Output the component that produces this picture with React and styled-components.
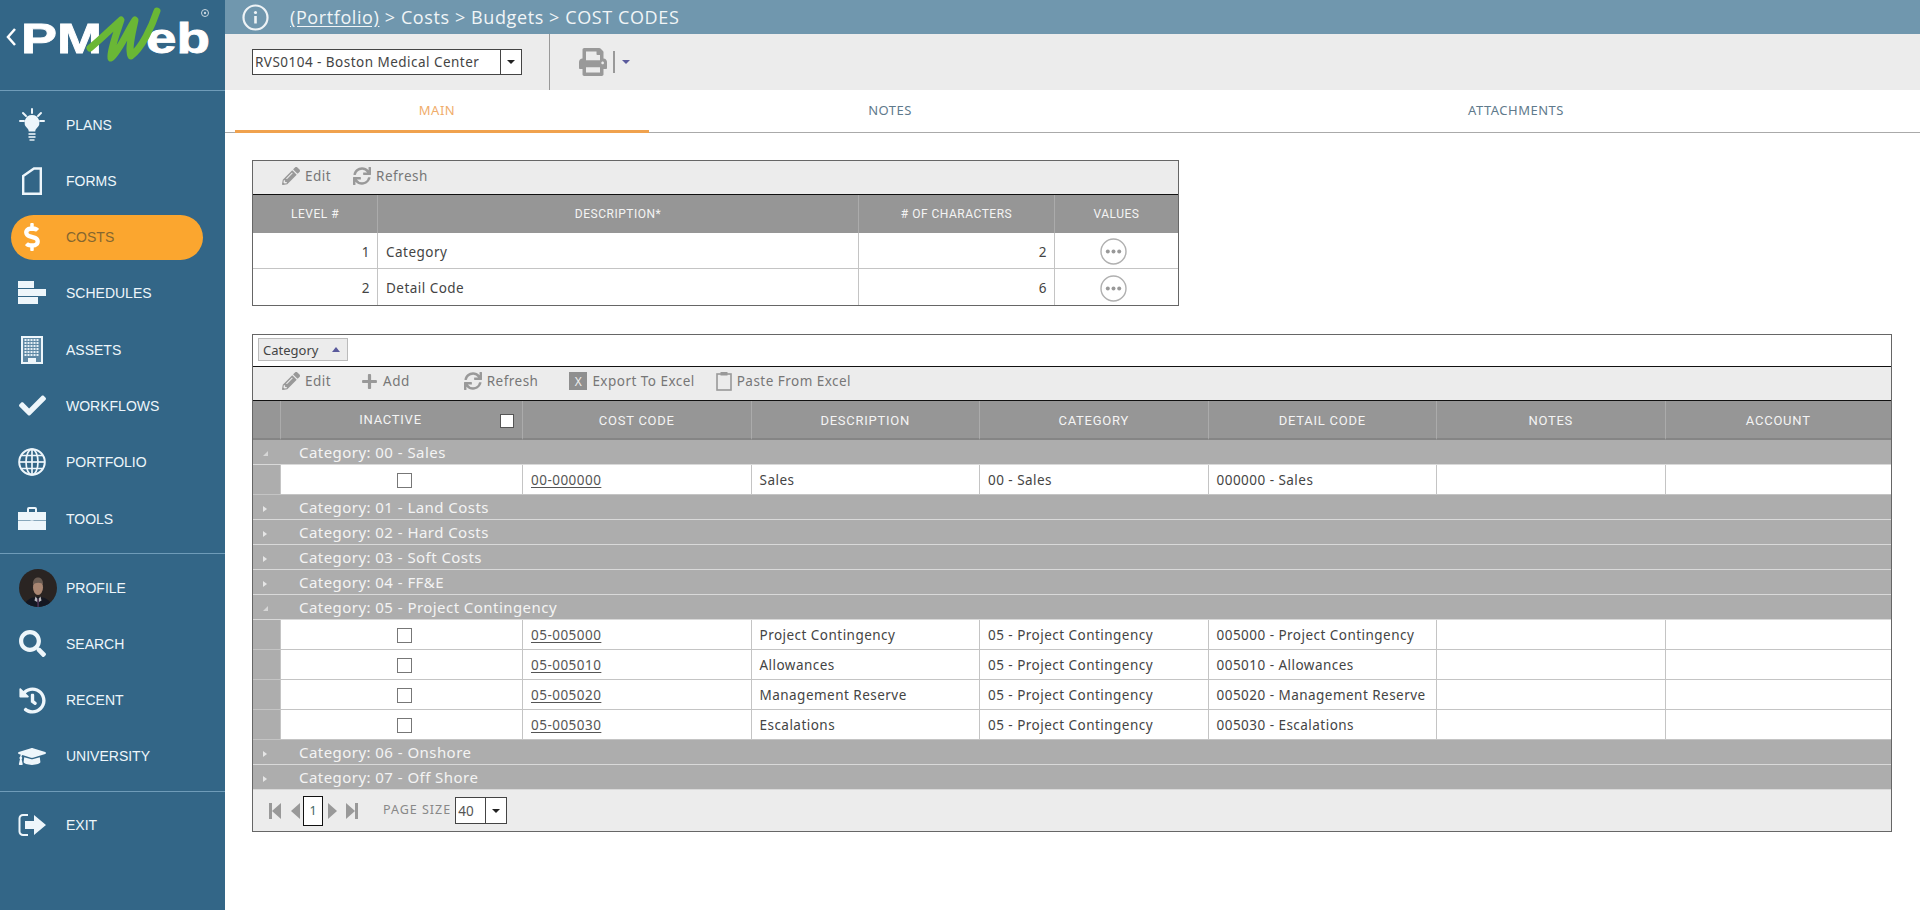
import React from 'react';
import styled, { createGlobalStyle } from 'styled-components';
import { FaDollarSign, FaCheck, FaSearch, FaHistory, FaGraduationCap, FaPencilAlt, FaSync, FaPrint, FaPlus } from 'react-icons/fa';

const UI_FONT = '"Noto Sans", Roboto, sans-serif';

const GlobalStyle = createGlobalStyle`
  * { box-sizing: border-box; }
  html, body { margin: 0; padding: 0; background: #fff; }
  body { font-family: ${UI_FONT}; color: #444; }
`;

const Shell = styled.div`
  display: flex;
  width: 1920px;
  height: 910px;
  overflow: hidden;
`;

const Sidebar = styled.nav`
  width: 225px;
  flex-shrink: 0;
  background: #336687;
  display: flex;
  flex-direction: column;
`;

const LogoBox = styled.div`
  height: 91px;
  border-bottom: 1px solid #6f9cb9;
`;

const NavGroup = styled.div`
  display: flex;
  flex-direction: column;
  gap: 11.3px;
  padding: 11px 0 12px;
  border-bottom: ${props => (props.$last ? 'none' : '1px solid #6f9cb9')};
`;

const NavItem = styled.a`
  display: flex;
  align-items: center;
  gap: 20px;
  height: 45px;
  margin: 0 22px 0 11px;
  padding-left: 7px;
  border-radius: 23px;
  background: ${props => (props.$active ? '#fba62f' : 'transparent')};
  color: ${props => (props.$active ? '#85662f' : '#eef6fb')};
  font-family: "Liberation Sans", Arial, sans-serif;
  font-size: 14px;
`;

const IconSlot = styled.span`
  width: 28px;
  height: 32px;
  flex-shrink: 0;
  display: flex;
  align-items: center;
  justify-content: center;
  color: ${props => (props.$active ? '#fff' : '#eef6fb')};
`;

const Avatar = styled.svg`
  width: 38px;
  height: 38px;
  flex-shrink: 0;
  margin-left: 12px;
`;

const Main = styled.main`
  flex: 1;
  min-width: 0;
  display: flex;
  flex-direction: column;
`;

const TitleBar = styled.header`
  height: 34px;
  background: #7097ae;
  color: #f1f5f7;
  display: flex;
  align-items: center;
  gap: 21px;
  padding-left: 17px;
  font-family: "Open Sans", sans-serif;
  font-size: 18px;
  letter-spacing: 0.6px;
  u { text-underline-offset: 2px; }
`;

const TopTools = styled.div`
  height: 56px;
  background: #ececec;
  display: flex;
  align-items: stretch;
  padding-left: 27px;
`;

const ProjectSelect = styled.div`
  align-self: center;
  width: 270px;
  height: 26px;
  background: #fff;
  border: 1px solid #444;
  display: flex;
  align-items: center;
  justify-content: space-between;
  padding-left: 2px;
  font-size: 13.5px;
  letter-spacing: 0.47px;
  color: #444;
`;

const SelectArrow = styled.span`
  width: 21px;
  height: 100%;
  border-left: 1px solid #444;
  display: flex;
  align-items: center;
  justify-content: center;
  &::after {
    content: '';
    border-left: 4px solid transparent;
    border-right: 4px solid transparent;
    border-top: 4px solid #222;
  }
`;

const ToolDivider = styled.div`
  width: 1px;
  background: #999;
  margin-left: 27px;
`;

const PrintGroup = styled.div`
  display: flex;
  align-items: center;
  margin-left: 29px;
  color: #999;
`;

const PrintBar = styled.span`
  width: 2px;
  height: 22px;
  background: #999;
  margin: 0 7px 0 6px;
`;

const SmallCaret = styled.span`
  border-left: 4px solid transparent;
  border-right: 4px solid transparent;
  border-top: 4px solid #5a5a9c;
`;

const TabBar = styled.div`
  height: 43px;
  display: flex;
  padding-left: 10px;
  border-bottom: 1px solid #aaa;
`;

const Tab = styled.div`
  width: ${props => props.$w}px;
  height: 43px;
  display: flex;
  align-items: center;
  justify-content: center;
  padding-bottom: ${props => (props.$active ? '1px' : '4px')};
  padding-right: ${props => (props.$active ? '10px' : '0')};
  font-size: 13px;
  letter-spacing: 0.5px;
  color: ${props => (props.$active ? '#f0ad6b' : '#5f7a8c')};
  border-bottom: ${props => (props.$active ? '3px solid #f0a24e' : 'none')};
`;

const Content = styled.div`
  padding: 27px 28px 0 27px;
  display: flex;
  flex-direction: column;
  gap: 28px;
`;

const Panel = styled.section`
  width: ${props => props.$w}px;
  border: 1px solid #666;
  background: #fff;
`;

const Toolbar = styled.div`
  height: 34px;
  background: #ececec;
  border-bottom: 1px solid #111;
  display: flex;
  align-items: center;
  padding: 0 0 ${props => props.$pb}px 29px;
`;

const ToolButton = styled.span`
  display: flex;
  align-items: center;
  gap: 5px;
  margin-left: ${props => props.$ml || 0}px;
  color: #777;
  font-size: 13.5px;
  letter-spacing: 0.47px;
  svg { color: #999; flex-shrink: 0; }
`;

const ExcelBox = styled.span`
  width: 18px;
  height: 18px;
  background: #8f8f8f;
  color: #eee;
  display: flex;
  align-items: center;
  justify-content: center;
  font-size: 12px;
`;

const Row = styled.div`
  display: grid;
  grid-template-columns: ${props => props.$cols};
  height: ${props => props.$h}px;
`;

const HeadCell = styled.div`
  background: #969696;
  color: #f4f4f4;
  font-family: Roboto, sans-serif;
  font-size: ${props => (props.$wide ? '13px' : '12px')};
  letter-spacing: ${props => (props.$wide ? '0.75px' : '0.5px')};
  display: flex;
  align-items: center;
  justify-content: center;
  padding-top: ${props => (props.$wide ? '2px' : '0')};
  border-left: 1px solid #ababab;
  border-bottom: ${props => (props.$wide ? '2px solid #858585' : 'none')};
  &:first-child { border-left: none; }
`;

const HeadLabel = styled.span`
  flex: 1;
  text-align: center;
  margin-top: -3px;
`;

const Cell = styled.div`
  display: flex;
  align-items: center;
  justify-content: ${props => props.$align || 'flex-start'};
  padding: 0 ${props => (props.$align === 'flex-end' ? '7px' : '8px')};
  border-left: 1px solid #c4c4c4;
  border-bottom: ${props => (props.$flat ? 'none' : '1px solid #c4c4c4')};
  font-size: 13.5px;
  letter-spacing: 0.47px;
  color: #444;
  background: #fff;
  &:first-child { border-left: none; }
`;

const LevelCell = styled(Cell)`
  padding-top: 2px;
  padding-right: ${props => (props.$nudge ? '14px' : '')};
`;

const Gutter = styled.div`
  background: #adadad;
  border-bottom: 1px solid #c4c4c4;
`;

const CodeLink = styled.a`
  color: #555;
  text-decoration: underline;
  text-underline-offset: 2px;
`;

const CheckBox = styled.span`
  width: ${props => props.$size || 15}px;
  height: ${props => props.$size || 15}px;
  border: 1px solid ${props => (props.$head ? '#555' : '#777')};
  background: #fff;
  flex-shrink: 0;
  margin-right: ${props => props.$mr || 0}px;
  margin-left: ${props => (props.$head ? 0 : 5)}px;
  margin-top: ${props => (props.$head ? 0 : 1)}px;
`;

const GroupRow = styled.div`
  height: 25px;
  background: #adadad;
  border-bottom: 1px solid #d9d9d9;
  color: #f4f4f4;
  font-size: 15px;
  letter-spacing: 0.45px;
  display: flex;
  align-items: center;
`;

const Twist = styled.span`
  width: 46px;
  padding-left: 10px;
  padding-top: 3px;
  display: flex;
  align-items: center;
  flex-shrink: 0;
  &::after {
    content: '';
    ${props => (props.$open
      ? 'border-left: 5px solid transparent; border-bottom: 5px solid #d6d6d6;'
      : 'border-top: 3.5px solid transparent; border-bottom: 3.5px solid transparent; border-left: 4px solid #e6e6e6;')}
  }
`;

const CategoryBar = styled.div`
  height: 32px;
  border-bottom: 1px solid #111;
  display: flex;
  align-items: center;
  padding: 0 0 2px 5px;
`;

const GroupChip = styled.span`
  width: 90px;
  height: 23px;
  background: #ececec;
  border: 1px solid #bbb;
  display: flex;
  align-items: center;
  justify-content: space-between;
  padding: 0 7px 0 4px;
  font-size: 13px;
  color: #444;
  &::after {
    content: '';
    border-left: 4px solid transparent;
    border-right: 4px solid transparent;
    border-bottom: 5px solid #5a5a9c;
  }
`;

const Pager = styled.div`
  height: 41px;
  background: #ececec;
  display: flex;
  align-items: center;
  padding-left: 16px;
`;

const PageArrow = styled.svg`
  flex-shrink: 0;
  margin-right: ${props => props.$mr || 0}px;
  color: #999;
`;

const PageBox = styled.span`
  width: 20px;
  height: 30px;
  border: 1px solid #111;
  background: #fff;
  display: flex;
  align-items: center;
  justify-content: center;
  font-size: 12.5px;
  color: #466;
  margin-right: 4px;
`;

const PageLabel = styled.span`
  margin-left: 25px;
  margin-right: 4px;
  color: #888;
  font-size: 12.5px;
  letter-spacing: 1px;
  margin-top: -3px;
`;

const SizeSelect = styled.div`
  width: 52px;
  height: 27px;
  border: 1px solid #444;
  background: #fff;
  display: flex;
  align-items: center;
  justify-content: space-between;
  padding-left: 2px;
  font-size: 13.5px;
  color: #555;
`;

const MoreButton = styled.svg`
  flex-shrink: 0;
`;

function BulbIcon() {
  return (
    <svg width="28" height="34" viewBox="0 0 28 34" fill="currentColor">
      <g stroke="currentColor" strokeWidth="2" strokeLinecap="round">
        <line x1="14" y1="1" x2="14" y2="5" />
        <line x1="5" y1="5" x2="8" y2="8" />
        <line x1="23" y1="5" x2="20" y2="8" />
        <line x1="2" y1="13" x2="6" y2="13" />
        <line x1="22" y1="13" x2="26" y2="13" />
      </g>
      <path d="M14 7a7.5 7.5 0 0 0-4.5 13.4c1 .9 1.2 2 1.2 3.1h6.6c0-1.100.2-2.200 1.200-3.100A7.500 7.500 0 0 0 14 7z" />
      <rect x="10.500" y="25" width="7" height="2" opacity=".8" />
      <rect x="10.500" y="28" width="7" height="2" opacity=".8" />
      <rect x="11.500" y="31" width="5" height="2" opacity=".7" />
    </svg>
  );
}

function FormIcon() {
  return (
    <svg width="20" height="28" viewBox="0 0 20 28" fill="none" stroke="currentColor" strokeWidth="2.400">
      <path d="M1.200 9L12 1.500H18.800V26.800H1.200Z" />
    </svg>
  );
}

function GanttIcon() {
  return (
    <svg width="28" height="24" viewBox="0 0 28 24" fill="currentColor">
      <rect x="0" y="0" width="16" height="7" />
      <rect x="0" y="8" width="28" height="7" />
      <rect x="0" y="16" width="20" height="7" />
    </svg>
  );
}

function BuildingIcon() {
  const windows = [];
  for (let r = 0; r < 6; r++) {
    for (let c = 0; c < 5; c++) {
      windows.push(<rect key={r + '-' + c} x={3.500 + c * 3} y={3 + r * 3} width="2" height="2" />);
    }
  }
  return (
    <svg width="22" height="28" viewBox="0 0 22 28">
      <rect x="1" y="1" width="20" height="26" fill="#5f89a5" stroke="#eef6fb" strokeWidth="2" />
      <g fill="#e6f0f6">{windows}</g>
      <rect x="7" y="22" width="8" height="5" fill="#eef6fb" />
    </svg>
  );
}

function GlobeIcon() {
  return (
    <svg width="28" height="28" viewBox="0 0 28 28" fill="none" stroke="currentColor" strokeWidth="1.700">
      <circle cx="14" cy="14" r="12.800" strokeWidth="2" />
      <ellipse cx="14" cy="14" rx="6" ry="12.800" />
      <line x1="14" y1="1" x2="14" y2="27" />
      <line x1="1" y1="14" x2="27" y2="14" />
      <path d="M3.500 7.500h21M3.500 20.500h21" />
    </svg>
  );
}

function CaseIcon() {
  return (
    <svg width="28" height="25" viewBox="0 0 28 25" fill="currentColor">
      <path d="M9 6V3a2 2 0 0 1 2-2h6a2 2 0 0 1 2 2v3h-2V3h-6v3z" />
      <path d="M0 6h28v8H0z" />
      <path d="M0 15h28v9H0z" />
      <rect x="0" y="14" width="28" height="1" opacity=".45" />
      <rect x="12.500" y="13" width="3" height="3" opacity=".6" />
    </svg>
  );
}

function ExitIcon() {
  return (
    <svg width="28" height="24" viewBox="0 0 28 24" fill="currentColor">
      <path d="M10 2H5a3.500 3.500 0 0 0-3.500 3.500v13A3.500 3.500 0 0 0 5 22h5" fill="none" stroke="currentColor" strokeWidth="2" />
      <path d="M7 8h9V2l12 10-12 10v-6H7z" />
    </svg>
  );
}

function InfoIcon() {
  return (
    <svg width="27" height="27" viewBox="0 0 27 27" fill="none" stroke="#eef3f6">
      <circle cx="13.500" cy="13.500" r="12" strokeWidth="2.200" />
      <rect x="12.200" y="12" width="2.600" height="7.500" fill="#eef3f6" stroke="none" />
      <circle cx="13.500" cy="8.500" r="1.600" fill="#eef3f6" stroke="none" />
    </svg>
  );
}

function ClipIcon() {
  return (
    <svg width="16" height="20" viewBox="0 0 16 20" fill="none" stroke="#999" strokeWidth="1.600">
      <rect x="1" y="3" width="14" height="16" />
      <rect x="4.500" y="1" width="7" height="3.500" fill="#999" stroke="none" />
    </svg>
  );
}

function Dots() {
  return (
    <MoreButton width="27" height="27" viewBox="0 0 27 27">
      <circle cx="13.500" cy="13.500" r="12.500" fill="#fff" stroke="#b0b0b0" strokeWidth="1.400" />
      <circle cx="7.800" cy="13.500" r="2" fill="#999" />
      <circle cx="13.500" cy="13.500" r="2" fill="#999" />
      <circle cx="19.200" cy="13.500" r="2" fill="#999" />
    </MoreButton>
  );
}

function StepIcon({ dir, bar, mr }) {
  const tri = dir === 'left' ? 'M12 1L3 9l9 8z' : 'M1 1l9 8-9 8z';
  return (
    <PageArrow $mr={mr} width="13" height="18" viewBox="0 0 13 18" fill="currentColor">
      <path d={tri} />
      {bar && <rect x={dir === 'left' ? 0 : 10} y="1" width="3" height="16" />}
    </PageArrow>
  );
}

function Logo() {
  return (
    <svg width="225" height="90" viewBox="0 0 225 90">
      <path d="M15 29L8 37l7 8" fill="none" stroke="#fff" strokeWidth="2.500" />
      <text x="21" y="53" fill="#fff" stroke="#fff" strokeWidth="0.800" fontFamily="Liberation Sans" fontWeight="700" fontSize="43" textLength="81" lengthAdjust="spacingAndGlyphs">PM</text>
      <text x="146" y="53" fill="#fff" stroke="#fff" strokeWidth="0.800" fontFamily="Liberation Sans" fontWeight="700" fontSize="42" textLength="64" lengthAdjust="spacingAndGlyphs">eb</text>
      <path d="M90 48C100 40 112 28 121 20C116 35 110 50 111 58C120 50 128 30 135 20C132 35 128 48 131 56C142 48 152 26 157 11" fill="none" stroke="#6ab735" strokeWidth="7" strokeLinecap="round" strokeLinejoin="round" />
      <circle cx="205" cy="13" r="3.500" fill="none" stroke="#c9d7e0" strokeWidth="1" />
      <circle cx="205" cy="13" r="1.200" fill="#c9d7e0" />
    </svg>
  );
}

function ProfilePic() {
  return (
    <Avatar viewBox="0 0 38 38">
      <defs>
        <clipPath id="face-clip"><circle cx="19" cy="19" r="19" /></clipPath>
      </defs>
      <g clipPath="url(#face-clip)">
        <rect width="38" height="38" fill="#2a2422" />
        <path d="M5 38c1-7 7-10 14-10s13 3 14 10z" fill="#141722" />
        <path d="M16.500 27.500l2.500 3 2.500-3 1 4-3.500 2-3.500-2z" fill="#b9b8bd" />
        <rect x="18.200" y="30" width="1.800" height="8" fill="#46304f" />
        <ellipse cx="19" cy="18.500" rx="5" ry="7.500" fill="#a98672" />
        <path d="M14 16c-.5-5 2-7.500 5-7.500s5.500 2.500 5 7.500c-1-3-8-3-10 0z" fill="#6a5b52" />
      </g>
    </Avatar>
  );
}

const NAV_TOP = [
  { label: 'PLANS', icon: <BulbIcon /> },
  { label: 'FORMS', icon: <FormIcon /> },
  { label: 'COSTS', icon: <FaDollarSign size={28} />, active: true },
  { label: 'SCHEDULES', icon: <GanttIcon /> },
  { label: 'ASSETS', icon: <BuildingIcon /> },
  { label: 'WORKFLOWS', icon: <FaCheck size={27} /> },
  { label: 'PORTFOLIO', icon: <GlobeIcon /> },
  { label: 'TOOLS', icon: <CaseIcon /> },
];

const NAV_MID = [
  { label: 'PROFILE', icon: <ProfilePic /> },
  { label: 'SEARCH', icon: <FaSearch size={27} /> },
  { label: 'RECENT', icon: <FaHistory size={27} /> },
  { label: 'UNIVERSITY', icon: <FaGraduationCap size={29} /> },
];

const LEVEL_COLS = '124px 481px 196px 1fr';
const CODE_COLS = '27px 242px 228.5px 228.5px 228.5px 228.5px 228.5px 1fr';
const CODE_HEADS = ['COST CODE', 'DESCRIPTION', 'CATEGORY', 'DETAIL CODE', 'NOTES', 'ACCOUNT'];

const GROUPS = [
  { name: 'Category: 00 - Sales', open: true, rows: [['00-000000', 'Sales', '00 - Sales', '000000 - Sales']] },
  { name: 'Category: 01 - Land Costs' },
  { name: 'Category: 02 - Hard Costs' },
  { name: 'Category: 03 - Soft Costs' },
  { name: 'Category: 04 - FF&E' },
  {
    name: 'Category: 05 - Project Contingency',
    open: true,
    rows: [
      ['05-005000', 'Project Contingency', '05 - Project Contingency', '005000 - Project Contingency'],
      ['05-005010', 'Allowances', '05 - Project Contingency', '005010 - Allowances'],
      ['05-005020', 'Management Reserve', '05 - Project Contingency', '005020 - Management Reserve'],
      ['05-005030', 'Escalations', '05 - Project Contingency', '005030 - Escalations'],
    ],
  },
  { name: 'Category: 06 - Onshore' },
  { name: 'Category: 07 - Off Shore' },
];

function NavList({ items, last }) {
  return (
    <NavGroup $last={last}>
      {items.map(item => (
        <NavItem key={item.label} $active={item.active}>
          <IconSlot $active={item.active}>{item.icon}</IconSlot>
          {item.label}
        </NavItem>
      ))}
    </NavGroup>
  );
}

function CodeRow({ row }) {
  return (
    <Row $cols={CODE_COLS} $h={30}>
      <Gutter />
      <Cell $align="center"><CheckBox /></Cell>
      <Cell><CodeLink>{row[0]}</CodeLink></Cell>
      <Cell>{row[1]}</Cell>
      <Cell>{row[2]}</Cell>
      <Cell>{row[3]}</Cell>
      <Cell />
      <Cell />
    </Row>
  );
}

function App() {
  return (
    <Shell>
      <GlobalStyle />
      <Sidebar>
        <LogoBox><Logo /></LogoBox>
        <NavList items={NAV_TOP} />
        <NavList items={NAV_MID} />
        <NavList items={[{ label: 'EXIT', icon: <ExitIcon /> }]} last />
      </Sidebar>
      <Main>
        <TitleBar>
          <InfoIcon />
          <span><u>(Portfolio)</u> &gt; Costs &gt; Budgets &gt; COST CODES</span>
        </TitleBar>
        <TopTools>
          <ProjectSelect>RVS0104 - Boston Medical Center<SelectArrow /></ProjectSelect>
          <ToolDivider />
          <PrintGroup>
            <FaPrint size={28} />
            <PrintBar />
            <SmallCaret />
          </PrintGroup>
        </TopTools>
        <TabBar>
          <Tab $w={414} $active>MAIN</Tab>
          <Tab $w={482}>NOTES</Tab>
          <Tab $w={770}>ATTACHMENTS</Tab>
        </TabBar>
        <Content>
          <Panel $w={927}>
            <Toolbar $pb={3}>
              <ToolButton><FaPencilAlt size={18} />Edit</ToolButton>
              <ToolButton $ml={22}><FaSync size={18} />Refresh</ToolButton>
            </Toolbar>
            <Row $cols={LEVEL_COLS} $h={38}>
              <HeadCell>LEVEL #</HeadCell>
              <HeadCell>DESCRIPTION*</HeadCell>
              <HeadCell># OF CHARACTERS</HeadCell>
              <HeadCell>VALUES</HeadCell>
            </Row>
            <Row $cols={LEVEL_COLS} $h={36}>
              <LevelCell $align="flex-end">1</LevelCell>
              <LevelCell>Category</LevelCell>
              <LevelCell $align="flex-end">2</LevelCell>
              <LevelCell $align="center" $nudge><Dots /></LevelCell>
            </Row>
            <Row $cols={LEVEL_COLS} $h={36}>
              <LevelCell $align="flex-end" $flat>2</LevelCell>
              <LevelCell $flat>Detail Code</LevelCell>
              <LevelCell $align="flex-end" $flat>6</LevelCell>
              <LevelCell $align="center" $flat $nudge><Dots /></LevelCell>
            </Row>
          </Panel>
          <Panel $w={1640}>
            <CategoryBar><GroupChip>Category</GroupChip></CategoryBar>
            <Toolbar $pb={5}>
              <ToolButton><FaPencilAlt size={18} />Edit</ToolButton>
              <ToolButton $ml={30}><FaPlus size={17} />Add</ToolButton>
              <ToolButton $ml={54}><FaSync size={18} />Refresh</ToolButton>
              <ToolButton $ml={31}><ExcelBox>X</ExcelBox>Export To Excel</ToolButton>
              <ToolButton $ml={21}><ClipIcon />Paste From Excel</ToolButton>
            </Toolbar>
            <Row $cols={CODE_COLS} $h={39}>
              <HeadCell $wide />
              <HeadCell $wide>
                <HeadLabel>INACTIVE</HeadLabel>
                <CheckBox $head $size={14} $mr={8} />
              </HeadCell>
              {CODE_HEADS.map(h => <HeadCell key={h} $wide>{h}</HeadCell>)}
            </Row>
            {GROUPS.map(g => (
              <React.Fragment key={g.name}>
                <GroupRow>
                  <Twist $open={g.open} />
                  {g.name}
                </GroupRow>
                {g.rows && g.rows.map(r => <CodeRow key={r[0]} row={r} />)}
              </React.Fragment>
            ))}
            <Pager>
              <StepIcon dir="left" bar mr={6} />
              <StepIcon dir="left" mr={2} />
              <PageBox>1</PageBox>
              <StepIcon dir="right" mr={5} />
              <StepIcon dir="right" bar />
              <PageLabel>PAGE SIZE</PageLabel>
              <SizeSelect>40<SelectArrow /></SizeSelect>
            </Pager>
          </Panel>
        </Content>
      </Main>
    </Shell>
  );
}

export default App;
